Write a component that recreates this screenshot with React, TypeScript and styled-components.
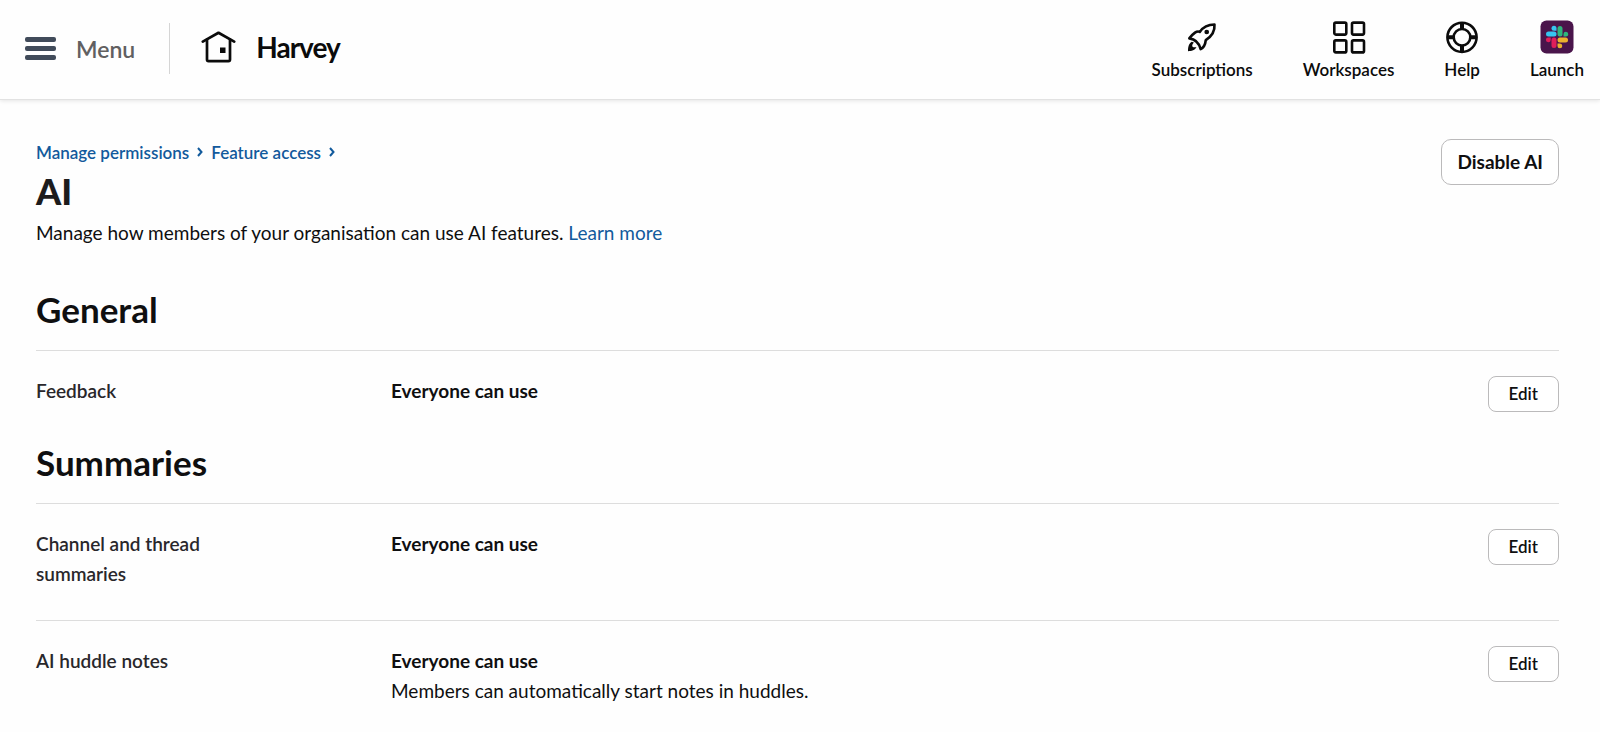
import React from 'react';
import styled, { createGlobalStyle } from 'styled-components';

const GlobalStyle = createGlobalStyle`
  *, *::before, *::after { box-sizing: border-box; }
  body {
    margin: 0;
    background: #fefefe;
    color: #0f0f10;
    font-family: Lato, 'Liberation Sans', sans-serif;
    font-size: 19px;
    line-height: 30px;
  }
  h1, h2, p { margin: 0; }
  button { font: inherit; color: inherit; cursor: pointer; }
  svg { display: block; flex: none; }
`;

const Header = styled.header`
  display: flex;
  align-items: center;
  height: 100px;
  padding: 0 16px 2px 25px;
  border-bottom: 1px solid #e2e2e2;
  box-shadow: 0 1px 4px rgba(0, 0, 0, 0.1);
  background: #fefefe;
`;

const MenuButton = styled.button`
  display: flex;
  align-items: center;
  gap: 20px;
  padding: 0;
  border: 0;
  background: none;
  color: #616061;
  font-size: 23px;
  font-weight: 600;
`;

const Divider = styled.span`
  width: 1px;
  height: 51px;
  margin: 0 31px 0 34px;
  background: #d5d5d5;
`;

const OrgLink = styled.a`
  display: flex;
  align-items: center;
  gap: 20px;
  padding-bottom: 4px;
  color: #0b0b0b;
  font-size: 28px;
  font-weight: 700;
  letter-spacing: -1px;
  text-decoration: none;
`;

const Nav = styled.nav`
  display: flex;
  align-self: flex-start;
  gap: 50px;
  margin-left: auto;
  padding-top: 20px;
`;

const NavLink = styled.a`
  display: flex;
  flex-direction: column;
  align-items: center;
  gap: 4px;
  color: #0b0b0b;
  font-size: 17px;
  font-weight: 600;
  line-height: 24px;
  text-decoration: none;
`;

const Main = styled.main`
  padding: 39px 41px 24px 36px;
`;

const TitleBar = styled.div`
  display: flex;
  align-items: flex-start;
  justify-content: space-between;
  padding-bottom: 42px;
`;

const Breadcrumbs = styled.nav`
  display: flex;
  align-items: center;
  gap: 7px;
  font-size: 17px;
  font-weight: 600;
  line-height: 28px;
`;

const TextLink = styled.a`
  color: #125a9c;
  text-decoration: none;
`;

const Title = styled.h1`
  padding-bottom: 3px;
  color: #1d1c1d;
  font-size: 36px;
  font-weight: 900;
  line-height: 48px;
`;

const SectionTitle = styled.h2`
  padding-bottom: 22px;
  font-size: 35px;
  font-weight: 700;
  line-height: 38px;
`;

const SettingRow = styled.div`
  display: flex;
  align-items: flex-start;
  padding: 25px 0 31px;
  border-top: 1px solid #dddddd;
`;

const LabelCell = styled.div`
  flex: 0 0 355px;
  padding-right: 140px;
  font-weight: 600;
  color: #29272b;
`;

const ValueCell = styled.div`
  flex: 1;
`;

const Value = styled.p`
  font-weight: 700;
`;

const OutlineButton = styled.button<{ $large?: boolean }>`
  height: ${p => (p.$large ? 46 : 36)}px;
  padding: 0 ${p => (p.$large ? 15 : 20)}px;
  border: 1px solid #bbbabb;
  border-radius: ${p => (p.$large ? 10 : 8)}px;
  background: #fff;
  font-size: ${p => (p.$large ? 19 : 17)}px;
  font-weight: ${p => (p.$large ? 700 : 600)};
  line-height: 24px;
`;

const MenuIcon = () => (
  <svg width="31" height="24" viewBox="0 0 31 24" fill="#414b5a" aria-hidden="true">
    <rect y="0" width="31" height="5" rx="2" />
    <rect y="9" width="31" height="5" rx="2" />
    <rect y="18" width="31" height="5" rx="2" />
  </svg>
);

const HouseIcon = () => (
  <svg width="35" height="32" viewBox="0 0 35 32" fill="none" stroke="#0b0b0b" strokeWidth="2.7" strokeLinecap="round" strokeLinejoin="round" aria-hidden="true">
    <path d="M1.8 10.6 17.5 1.8 33.2 10.6" />
    <path d="M6 8.5V28.5a1.6 1.6 0 0 0 1.6 1.6H27.4a1.6 1.6 0 0 0 1.6-1.6V8.5" />
    <rect x="19" y="16.5" width="5.5" height="5.5" fill="#0b0b0b" stroke="none" />
  </svg>
);

const RocketIcon = () => (
  <svg width="34" height="34" viewBox="-1 -1 36 36" fill="none" stroke="#0b0b0b" strokeWidth="2.8" strokeLinejoin="round" aria-hidden="true">
    <path d="M30.2 3.8C23.5 3.8 18 6.8 14.6 11.6C13 10.8 11 11.4 9.6 12.4C7.4 14 5.2 16 3.6 18.4C9 19 13.4 21.8 15.6 29.8C18.4 28.4 20.4 25.6 21 20.2C27.2 16.2 30.8 11 30.2 3.8Z" />
    <circle cx="22" cy="11.7" r="2.5" fill="#0b0b0b" stroke="none" />
    <path d="M6.2 22C2.8 24 2.2 27.8 2.2 32C5.8 32 9.8 31 11.2 27.6C9.4 28.2 7.8 28 7 27.2C6.2 26.2 6.8 24.4 8.4 22.8Z" fill="#0b0b0b" stroke="none" />
  </svg>
);

const GridIcon = () => (
  <svg width="34" height="34" viewBox="0 0 34 34" fill="none" stroke="#0b0b0b" strokeWidth="2.6" aria-hidden="true">
    <rect x="2.3" y="2.6" width="12" height="12" rx="1.5" />
    <rect x="20" y="2.6" width="12" height="12" rx="1.5" />
    <rect x="2.3" y="20.4" width="12" height="12" rx="1.5" />
    <rect x="20" y="20.4" width="12" height="12" rx="1.5" />
  </svg>
);

const HelpIcon = () => (
  <svg width="34" height="34" viewBox="0 0 34 34" fill="none" stroke="#0b0b0b" strokeWidth="2.6" aria-hidden="true">
    <circle cx="17" cy="17.3" r="14.6" />
    <circle cx="17" cy="17.3" r="8.3" />
    <path d="M17 2.8V9M17 25.5V31.8M2.5 17.3H9M25 17.3H31.5" strokeWidth="4" />
  </svg>
);

const SlackIcon = () => (
  <svg width="34" height="34" viewBox="0 0 34 34" aria-hidden="true">
    <rect x="0.5" y="0.5" width="33" height="33" rx="6" fill="#4a154b" />
    <g fill="#36c5f0">
      <rect x="6" y="11.5" width="10.5" height="5" rx="2.5" />
      <path d="M16.5 10.5V8.3a2.5 2.5 0 1 0-2.5 2.5h2.5Z" />
    </g>
    <g fill="#2eb67d">
      <rect x="17.5" y="6" width="5" height="10.5" rx="2.5" />
      <path d="M23.5 16.5V14a2.4 2.4 0 1 1 2.4 2.5Z" />
    </g>
    <g fill="#ecb22e">
      <rect x="17.5" y="17.5" width="10.5" height="5" rx="2.5" />
      <path d="M17.5 23.5H20a2.4 2.4 0 1 1-2.5 2.4Z" />
    </g>
    <g fill="#e01e5a">
      <rect x="11.5" y="17.5" width="5" height="10.5" rx="2.5" />
      <path d="M10.7 17.5V20a2.4 2.4 0 1 1-2.4-2.5Z" />
    </g>
  </svg>
);

const Chevron = () => (
  <svg width="8" height="12" viewBox="0 0 8 12" fill="none" stroke="#125a9c" strokeWidth="2" aria-hidden="true">
    <path d="M2 1 5.5 5 2 9" />
  </svg>
);

const navItems = [
  { label: 'Subscriptions', Icon: RocketIcon },
  { label: 'Workspaces', Icon: GridIcon },
  { label: 'Help', Icon: HelpIcon },
  { label: 'Launch', Icon: SlackIcon },
];

type Setting = { label: string; value: string; note?: string };

const sections: { title: string; settings: Setting[] }[] = [
  { title: 'General', settings: [{ label: 'Feedback', value: 'Everyone can use' }] },
  {
    title: 'Summaries',
    settings: [
      { label: 'Channel and thread summaries', value: 'Everyone can use' },
      {
        label: 'AI huddle notes',
        value: 'Everyone can use',
        note: 'Members can automatically start notes in huddles.',
      },
    ],
  },
];

export default function App() {
  return (
    <>
      <GlobalStyle />
      <Header>
        <MenuButton type="button">
          <MenuIcon />
          Menu
        </MenuButton>
        <Divider />
        <OrgLink href="#home">
          <HouseIcon />
          Harvey
        </OrgLink>
        <Nav aria-label="Account">
          {navItems.map(({ label, Icon }) => (
            <NavLink key={label} href={`#${label.toLowerCase()}`}>
              <Icon />
              {label}
            </NavLink>
          ))}
        </Nav>
      </Header>
      <Main>
        <TitleBar>
          <div>
            <Breadcrumbs aria-label="Breadcrumb">
              <TextLink href="#permissions">Manage permissions</TextLink>
              <Chevron />
              <TextLink href="#features">Feature access</TextLink>
              <Chevron />
            </Breadcrumbs>
            <Title>AI</Title>
            <p>
              Manage how members of your organisation can use AI features.{' '}
              <TextLink href="#learn">Learn more</TextLink>
            </p>
          </div>
          <OutlineButton type="button" $large>
            Disable AI
          </OutlineButton>
        </TitleBar>
        {sections.map(section => (
          <section key={section.title}>
            <SectionTitle>{section.title}</SectionTitle>
            {section.settings.map(setting => (
              <SettingRow key={setting.label}>
                <LabelCell>{setting.label}</LabelCell>
                <ValueCell>
                  <Value>{setting.value}</Value>
                  {setting.note && <p>{setting.note}</p>}
                </ValueCell>
                <OutlineButton type="button" aria-label={`Edit ${setting.label}`}>
                  Edit
                </OutlineButton>
              </SettingRow>
            ))}
          </section>
        ))}
      </Main>
    </>
  );
}
